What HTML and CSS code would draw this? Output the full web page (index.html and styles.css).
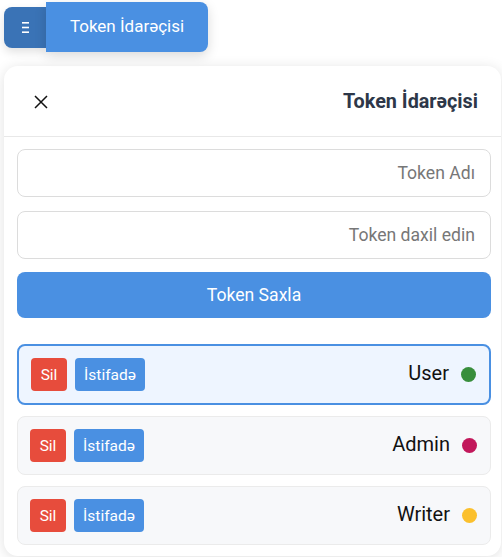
FILE: index.html
```html
<!DOCTYPE html>
<html lang="az">
<head>
<meta charset="utf-8">
<title>Token İdarəçisi</title>
<link rel="stylesheet" href="styles.css">
</head>
<body>
<div class="topbar">
  <button class="menu-btn" aria-label="menu">
    <svg width="7" height="11" viewBox="0 0 7 11"><rect x="0" y="0" width="7" height="1.6" fill="#fff"/><rect x="0" y="4.7" width="7" height="1.6" fill="#fff"/><rect x="0" y="9.4" width="7" height="1.6" fill="#fff"/></svg>
  </button>
  <div class="tab">Token İdarəçisi</div>
</div>
<div class="panel">
  <div class="panel-head">
    <button class="close" aria-label="close">
      <svg width="14" height="14" viewBox="0 0 14 14"><path d="M1 1 L13 13 M13 1 L1 13" stroke="#111" stroke-width="1.5" fill="none"/></svg>
    </button>
    <h2 class="title">Token İdarəçisi</h2>
  </div>
  <div class="panel-body">
    <input class="field" type="text" placeholder="Token Adı">
    <input class="field" type="text" placeholder="Token daxil edin">
    <button class="save">Token Saxla</button>
    <div class="list">
      <div class="item active">
        <button class="btn del">Sil</button>
        <button class="btn use">İstifadə</button>
        <span class="name">User</span>
        <span class="dot green"></span>
      </div>
      <div class="item">
        <button class="btn del">Sil</button>
        <button class="btn use">İstifadə</button>
        <span class="name">Admin</span>
        <span class="dot pink"></span>
      </div>
      <div class="item">
        <button class="btn del">Sil</button>
        <button class="btn use">İstifadə</button>
        <span class="name">Writer</span>
        <span class="dot yellow"></span>
      </div>
    </div>
  </div>
</div>
</body>
</html>
```
FILE: styles.css
```css
* { box-sizing: border-box; }
html, body { margin: 0; padding: 0; background: #fff; font-family: Roboto, "Noto Sans", sans-serif; overflow: hidden; }
body { height: 557px; }
.topbar { display: flex; align-items: center; margin: 2px 0 0 4px; height: 50px; }
.menu-btn { width: 42px; height: 41px; border: 0; background: #3a73b6; border-radius: 8px 0 0 8px; display: flex; align-items: center; justify-content: center; padding: 0; margin: 0; box-shadow: 0 4px 10px rgba(0,0,0,0.12); }
.tab { width: 162px; height: 50px; background: #4a90e2; color: #fff; font-size: 17px; border-radius: 0 8px 8px 0; display: flex; align-items: center; justify-content: center; padding-bottom: 2px; box-shadow: 0 4px 12px rgba(0,0,0,0.15); }
.panel { margin: 14px 0 0 4px; width: 497px; height: 490px; background: #fff; border-radius: 14px; box-shadow: 0 2px 14px rgba(0,0,0,0.12); overflow: hidden; }
.panel-head { height: 71px; border-bottom: 1px solid #e8e8e8; display: flex; align-items: center; justify-content: space-between; padding: 0 23px 0 30px; }
.close { border: 0; background: none; padding: 0; width: 14px; height: 14px; display: flex; margin-top: 1px; }
.title { margin: 0; font-size: 19.8px; font-weight: 700; color: #2d3748; }
.panel-body { padding: 12px 10px 0 13px; display: flex; flex-direction: column; }
.field { height: 48px; border: 1px solid #dcdcdc; border-radius: 8px; padding: 0 15px; font-family: Roboto, sans-serif; font-size: 17.6px; text-align: right; margin-bottom: 14px; outline: none; }
.field::placeholder { color: #777; }
.save { height: 46px; border: 0; border-radius: 8px; background: #4a90e2; color: #fff; font-family: Roboto, sans-serif; font-size: 17.6px; margin-top: -1px; }
.list { margin-top: 26px; display: flex; flex-direction: column; gap: 11px; }
.item { display: flex; align-items: center; gap: 8px; padding: 12px 13px 12px 12px; border: 1px solid #ebebeb; border-radius: 8px; background: #f7f8fa; }
.item.active { border: 2px solid #4a90e2; background: #eef5ff; }
.btn { height: 33px; border: 0; border-radius: 4px; color: #fff; font-family: Roboto, sans-serif; font-size: 15.5px; padding: 0; }
.del { background: #e74c3c; width: 36px; }
.use { background: #4a90e2; width: 70px; }
.name { margin-left: auto; font-size: 20px; color: #111; margin-right: 4px; padding-bottom: 3px; }
.dot { width: 15px; height: 15px; border-radius: 50%; }
.green { background: #388e3c; }
.pink { background: #c2185b; }
.yellow { background: #fbc02d; }
```
